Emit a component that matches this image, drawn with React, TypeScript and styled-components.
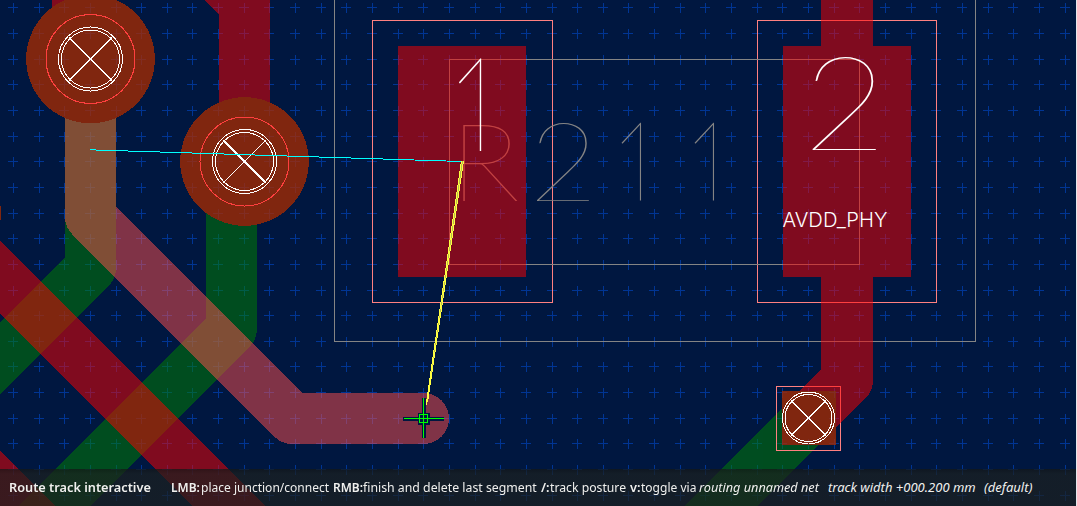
import React from "react";
import styled, { createGlobalStyle } from "styled-components";

const GlobalStyle = createGlobalStyle`
  body { margin: 0; background: #e6e7ec; overflow: hidden; }
`;

const Editor = styled.main`
  position: relative;
  width: 1077px;
  height: 506px;
  overflow: hidden;
  font-family: "Noto Sans", sans-serif;
`;

const Board = styled.svg`
  display: block;
  width: 1076px;
  height: 506px;
  background: #001740;
  shape-rendering: crispEdges;
`;

const Copper = styled.g<{ $color: string }>`
  opacity: 0.5;
  fill: ${(p) => p.$color};
  stroke: ${(p) => p.$color};
`;

const Track = styled.path<{ $width?: number }>`
  fill: none;
  stroke-width: ${(p) => p.$width ?? 51}px;
  stroke-linejoin: round;
  stroke-linecap: round;
`;

const Fill = styled.g`
  stroke: none;
`;

const Outline = styled.g<{ $color: string; $width?: number }>`
  fill: none;
  stroke: ${(p) => p.$color};
  stroke-width: ${(p) => p.$width ?? 1}px;
`;

const Label = styled.text<{ $color: string; $weight?: number; $family?: string }>`
  font-family: ${(p) => p.$family ?? "Lato"}, sans-serif;
  font-weight: ${(p) => p.$weight ?? 100};
  fill: ${(p) => p.$color};
`;

const HintBar = styled.footer`
  position: absolute;
  left: 0;
  bottom: 0;
  box-sizing: border-box;
  width: 1076px;
  height: 37px;
  padding: 0 0 2px 9px;
  display: flex;
  align-items: center;
  background: linear-gradient(rgba(20, 23, 22, 0.74), rgba(28, 32, 30, 0.7) 5px);
  color: #f0f0ee;
  font-size: 13px;
  line-height: 18px;
  white-space: pre;
`;

const Hint = styled.span<{ $width: number; $bold?: boolean; $italic?: boolean; $stretch?: number }>`
  flex: 0 0 ${(p) => p.$width}px;
  width: ${(p) => p.$width}px;
  font-weight: ${(p) => (p.$bold ? 600 : 400)};
  font-style: ${(p) => (p.$italic ? "italic" : "normal")};
  transform: scaleX(${(p) => p.$stretch ?? (p.$italic ? 1 : p.$bold ? 0.98 : 0.925)});
  transform-origin: left;
`;

const columns = Array.from({ length: 42 }, (_, i) => Math.round(12.9 + i * 25.65));
const rows = Array.from({ length: 20 }, (_, i) => Math.round(7.35 + i * 25.65));
const gridPath = rows
  .map((y) => columns.map((x) => `M${x - 5} ${y + 0.5}h10M${x + 0.5} ${y - 4}v10`).join(""))
  .join("");

type GlyphProps = { x: number; y: number; size: number; sx?: number; color: string; children: string };

function Glyph({ x, y, size, sx = 1, color, children }: GlyphProps) {
  return (
    <Label $color={color} fontSize={size} transform={`translate(${x} ${y}) scale(${sx} 1)`}>
      {children}
    </Label>
  );
}

type HoleProps = { x: number; y: number; outer: number; inner: number; rising?: boolean };

function Hole({ x, y, outer, inner, rising }: HoleProps) {
  const d = inner * 0.735;
  const falling = `M${x - d} ${y - d}L${x + d} ${y + d}`;
  const climbing = `M${x - d} ${y + d}L${x + d} ${y - d}`;
  return (
    <Outline $color="#fff">
      <circle cx={x} cy={y} r={outer} />
      <circle cx={x} cy={y} r={inner} />
      <path d={rising ? falling : climbing} />
      <path d={rising ? climbing : falling} strokeWidth={1.5} />
    </Outline>
  );
}

export default function App() {
  const silk = "#848484";
  return (
    <Editor>
      <GlobalStyle />
      <Board viewBox="0 0 1076 506">
        <defs>
          <mask id="outsideVia" maskUnits="userSpaceOnUse" x="0" y="0" width="1076" height="506">
            <rect width="1076" height="506" fill="#fff" />
            <circle cx="90.5" cy="59" r="64.3" fill="#000" />
          </mask>
          <clipPath id="padStem">
            <rect x="440" y="40" width="42" height="111" />
          </clipPath>
          <clipPath id="silkStems">
            <rect x="600" y="110" width="41.5" height="90.5" />
            <rect x="680" y="110" width="34.5" height="90.5" />
          </clipPath>
        </defs>

        <Outline $color="#003594">
          <path d={gridPath} />
        </Outline>

        <Outline $color="#ff8080">
          <rect x="372.5" y="20.5" width="180" height="282" />
          <rect x="757.5" y="20.5" width="179" height="282" />
        </Outline>
        <Outline $color={silk}>
          <rect x="334.5" y="-20" width="641" height="361.5" />
          <rect x="449.5" y="59.5" width="410" height="205" />
        </Outline>
        <Glyph x={449.5} y={200.5} size={108.5} sx={1.1} color={silk}>R</Glyph>
        <Glyph x={529} y={201} size={110} sx={1.08} color={silk}>2</Glyph>
        <g clipPath="url(#silkStems)">
          <Glyph x={610.2} y={202} size={112} sx={0.85} color={silk}>1</Glyph>
          <Glyph x={683.2} y={202} size={112} sx={0.85} color={silk}>1</Glyph>
        </g>

        <Copper $color="#008400">
          <Track d="M90.5 59V268L-60 418.5" />
          <Track d="M231.5 171V329L20 540.5" />
          <Track d="M808.5 418.5L690 537" />
          <Fill>
            <circle cx="90.5" cy="59" r="64.3" />
            <circle cx="244.5" cy="161.5" r="64.3" />
            <rect x="782" y="391" width="54" height="54" />
            <rect x="0" y="206" width="1" height="14" />
          </Fill>
        </Copper>

        <Outline $color="#ff8080">
          <circle cx="90.5" cy="59" r="44.5" />
          <circle cx="244.5" cy="161.5" r="44.5" />
          <rect x="776.5" y="386.5" width="64" height="64" />
        </Outline>

        <Copper $color="#ff0000">
          <Track d="M-40 237L270 547" />
          <Track d="M-40 446.7L60 546.7" />
          <Track d="M847 -40V380L808.5 418.5" $width={52} />
          <Fill>
            <path d="M52 0H103V59H52Z" />
            <path d="M204 0H270V161H219V15Z" />
            <rect x="398" y="46" width="128" height="231" />
            <rect x="783" y="46" width="128" height="231" />
            <circle cx="90.5" cy="59" r="64.3" />
            <circle cx="244.5" cy="161.5" r="64.3" />
            <rect x="782" y="391" width="54" height="54" />
            <rect x="0" y="206" width="1" height="14" />
          </Fill>
        </Copper>

        <g mask="url(#outsideVia)">
          <Copper $color="#ff504e">
            <Track d="M90.5 59V216.6L292.2 418.5H423.5" />
          </Copper>
        </g>

        <Hole x={90.5} y={59} outer={32} inner={29} rising />
        <Hole x={244.5} y={161.5} outer={32} inner={29} />
        <Hole x={808.5} y={418} outer={26} inner={23.5} />

        <g clipPath="url(#padStem)">
          <Glyph x={446} y={153} size={134} sx={0.81} color="#fff">1</Glyph>
        </g>
        <Glyph x={803} y={151} size={132.5} sx={1.09} color="#fff">2</Glyph>
        <Label $color="#fff" $weight={300} $family="Inter" fontSize="19.5" x="782.5" y="227" textLength="105" lengthAdjust="spacingAndGlyphs">
          AVDD_PHY
        </Label>

        <Outline $color="#00ffff">
          <path d="M90 149.8L462 161.5" />
        </Outline>
        <Outline $color="#b8b850">
          <path d="M462.5 161L426.5 402" />
        </Outline>
        <Outline $color="#ffff40">
          <path d="M461.5 161L425.5 409M463.5 161L427.5 402" />
        </Outline>

        <Outline $color="#001740" $width={4}>
          <path d="M403 418.5H444M423.5 398V438" />
          <rect x="419.5" y="414.5" width="8" height="8" />
        </Outline>
        <Outline $color="#00ff00">
          <path d="M404 418.5H444M423.5 398V438" />
          <rect x="419.5" y="414.5" width="8" height="8" />
        </Outline>
      </Board>

      <HintBar>
        <Hint $width={162} $bold>Route track interactive</Hint>
        <Hint $width={30} $bold $stretch={0.92}>LMB:</Hint>
        <Hint $width={132}>place junction/connect</Hint>
        <Hint $width={30} $bold $stretch={0.92}>RMB:</Hint>
        <Hint $width={178} $stretch={0.946}>finish and delete last segment</Hint>
        <Hint $width={9} $bold>/:</Hint>
        <Hint $width={80} $stretch={0.94}>track posture</Hint>
        <Hint $width={11} $bold>v:</Hint>
        <Hint $width={58}>toggle via</Hint>
        <Hint $width={129} $italic $stretch={0.975}>routing unnamed net</Hint>
        <Hint $width={156} $italic>track width +000.200 mm</Hint>
        <Hint $width={50} $italic>(default)</Hint>
      </HintBar>
    </Editor>
  );
}
